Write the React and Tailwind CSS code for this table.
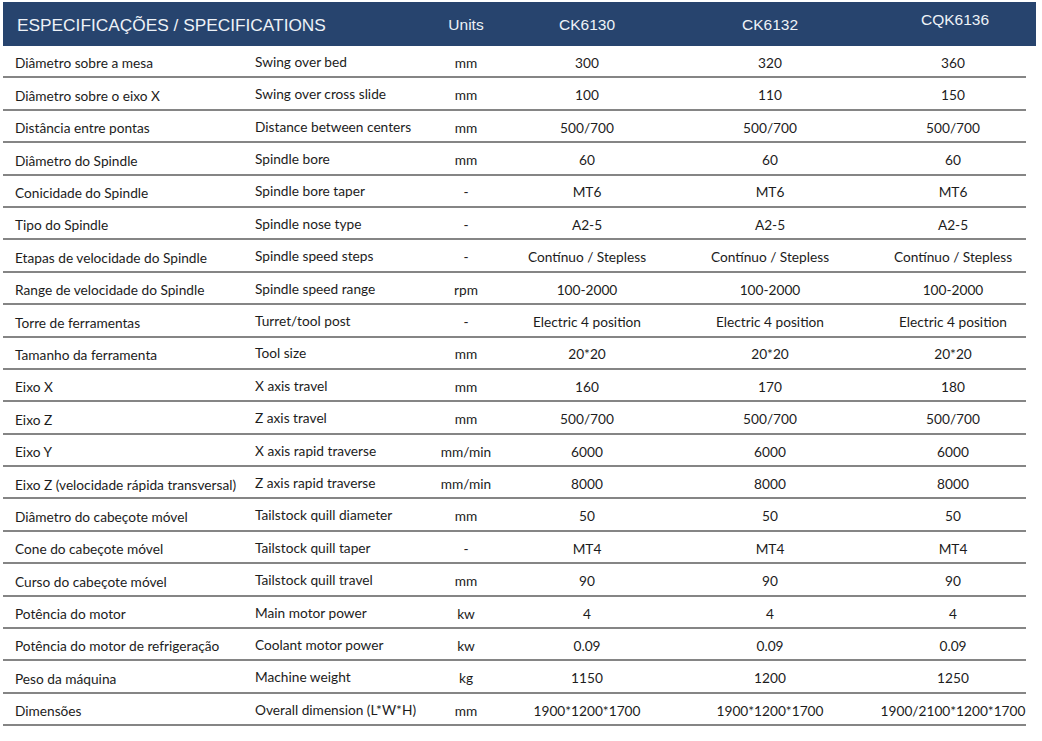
import React from "react";

const rows = [
  ["Diâmetro sobre a mesa", "Swing over bed", "mm", "300", "320", "360"],
  ["Diâmetro sobre o eixo X", "Swing over cross slide", "mm", "100", "110", "150"],
  ["Distância entre pontas", "Distance between centers", "mm", "500/700", "500/700", "500/700"],
  ["Diâmetro do Spindle", "Spindle bore", "mm", "60", "60", "60"],
  ["Conicidade do Spindle", "Spindle bore taper", "-", "MT6", "MT6", "MT6"],
  ["Tipo do Spindle", "Spindle nose type", "-", "A2-5", "A2-5", "A2-5"],
  ["Etapas de velocidade do Spindle", "Spindle speed steps", "-", "Contínuo / Stepless", "Contínuo / Stepless", "Contínuo / Stepless"],
  ["Range de velocidade do Spindle", "Spindle speed range", "rpm", "100-2000", "100-2000", "100-2000"],
  ["Torre de ferramentas", "Turret/tool post", "-", "Electric 4 position", "Electric 4 position", "Electric 4 position"],
  ["Tamanho da ferramenta", "Tool size", "mm", "20*20", "20*20", "20*20"],
  ["Eixo X", "X axis travel", "mm", "160", "170", "180"],
  ["Eixo Z", "Z axis travel", "mm", "500/700", "500/700", "500/700"],
  ["Eixo Y", "X axis rapid traverse", "mm/min", "6000", "6000", "6000"],
  ["Eixo Z (velocidade rápida transversal)", "Z axis rapid traverse", "mm/min", "8000", "8000", "8000"],
  ["Diâmetro do cabeçote móvel", "Tailstock quill diameter", "mm", "50", "50", "50"],
  ["Cone do cabeçote móvel", "Tailstock quill taper", "-", "MT4", "MT4", "MT4"],
  ["Curso do cabeçote móvel", "Tailstock quill travel", "mm", "90", "90", "90"],
  ["Potência do motor", "Main motor power", "kw", "4", "4", "4"],
  ["Potência do motor de refrigeração", "Coolant motor power", "kw", "0.09", "0.09", "0.09"],
  ["Peso da máquina", "Machine weight", "kg", "1150", "1200", "1250"],
  ["Dimensões", "Overall dimension (L*W*H)", "mm", "1900*1200*1700", "1900*1200*1700", "1900/2100*1200*1700"],
];

const cols = "grid grid-cols-[240px_177px_92px_150px_216px_150px]";

export default function App() {
  return (
    <div className="w-[1042px] h-[741px] bg-white pt-[2px] pl-[3px]">
      <div className={`${cols} w-[1033px] h-[44px] bg-[#27446e] text-[#eef2f7] font-['Liberation_Sans',Arial,sans-serif] items-center`}>
        <div className="col-span-2 pl-[14px] pt-[3px] text-[17.3px] whitespace-nowrap">ESPECIFICAÇÕES / SPECIFICATIONS</div>
        <div className="text-center text-[15.5px] pt-[1px]">Units</div>
        <div className="text-center text-[15.5px] pt-[2px]">CK6130</div>
        <div className="text-center text-[15.5px] pt-[2px]">CK6132</div>
        <div className="text-center text-[15.5px] pb-[8px] pl-[4px]">CQK6136</div>
      </div>
      <div className="w-[1023px] font-['Lato','Noto_Sans',sans-serif] text-[13.7px] text-[#1c1c1c]">
        {rows.map((r, i) => (
          <div key={i} className={`${cols} h-[32.4px] items-center border-b-2 border-[#858585] whitespace-nowrap`}>
            <div className="pl-[12px] pt-[5px]">{r[0]}</div>
            <div className="pl-[12px] pt-[2px]">{r[1]}</div>
            <div className="text-center pt-[4px]">{r[2]}</div>
            <div className="text-center pt-[4px]">{r[3]}</div>
            <div className="text-center pt-[4px]">{r[4]}</div>
            <div className="text-center pt-[4px]">{r[5]}</div>
          </div>
        ))}
      </div>
    </div>
  );
}
